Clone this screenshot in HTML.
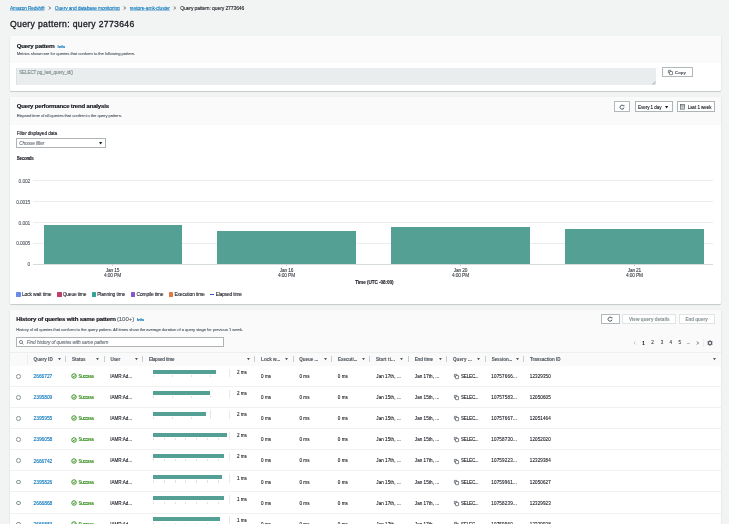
<!DOCTYPE html><html><head><meta charset="utf-8"><style>html,body{margin:0;padding:0;width:729px;height:524px;overflow:hidden;background:#f2f3f3;}
body{position:relative;font-family:"Liberation Sans",sans-serif;color:#16191f;}
#root{position:absolute;left:0;top:0;width:729px;height:524px;will-change:transform;overflow:hidden}
.t{position:absolute;white-space:nowrap;line-height:1;-webkit-text-stroke:0.1px currentColor}
.r{position:absolute;box-sizing:border-box;}
.b{font-weight:700}.i{font-style:italic}
.lk{color:#0073bb}
.g{color:#545b64}.lg{color:#687078}
.card{position:absolute;background:#fff;border-radius:1px;box-shadow:0 0.8px 0.7px 0 rgba(0,28,36,.17),0.5px 0.2px 0.5px 0 rgba(0,28,36,.07),-0.5px 0.2px 0.5px 0 rgba(0,28,36,.07);}
svg{position:absolute;overflow:visible}
</style></head><body><div id="root">
<div class="t lk" style="left:10.00px;top:6.70px;font-size:4.823px;letter-spacing:-0.150px;">Amazon Redshift</div>
<div class="r" style="left:10.00px;top:9.70px;width:34.40px;height:0.40px;background:#a3c6e3"></div>
<svg style="left:48.50px;top:7.90px" width="1" height="1"><path d="M0 -1.50 L1.50 0 L0 1.50" fill="none" stroke="#454b53" stroke-width="0.9"/></svg>
<div class="t lk" style="left:54.80px;top:6.72px;font-size:4.876px;letter-spacing:-0.113px;">Query and database monitoring</div>
<div class="r" style="left:54.80px;top:9.70px;width:64.80px;height:0.40px;background:#a3c6e3"></div>
<svg style="left:124.20px;top:7.90px" width="1" height="1"><path d="M0 -1.50 L1.50 0 L0 1.50" fill="none" stroke="#454b53" stroke-width="0.9"/></svg>
<div class="t lk" style="left:129.80px;top:6.71px;font-size:4.929px;letter-spacing:-0.114px;">restore-amk-cluster</div>
<div class="r" style="left:129.80px;top:9.70px;width:40.10px;height:0.40px;background:#a3c6e3"></div>
<svg style="left:174.10px;top:7.90px" width="1" height="1"><path d="M0 -1.50 L1.50 0 L0 1.50" fill="none" stroke="#454b53" stroke-width="0.9"/></svg>
<div class="t " style="left:180.20px;top:5.70px;font-size:5.035px;letter-spacing:-0.104px;">Query pattern: query 2773646</div>
<div class="t " style="left:10.00px;top:19.66px;font-size:8.649px;letter-spacing:0.340px;-webkit-text-stroke:0.3px #16191f">Query pattern: query 2773646</div>
<div class="card" style="left:9.5px;top:36px;width:711.5px;height:55.3px;"></div>
<div class="r" style="left:9.50px;top:36.00px;width:711.50px;height:26.80px;background:#fafafa"></div>
<div class="t b" style="left:16.70px;top:42.80px;font-size:6.148px;letter-spacing:-0.167px;-webkit-text-stroke:0.18px #16191f">Query pattern</div>
<div class="t b lk" style="left:57.60px;top:44.93px;font-size:4.346px;letter-spacing:-0.109px;">Info</div>
<div class="t g" style="left:16.70px;top:52.05px;font-size:4.240px;letter-spacing:-0.092px;">Metrics shown are for queries that conform to the following pattern.</div>
<div class="r" style="left:16.10px;top:67.50px;width:639.70px;height:17.20px;background:#eaeded;border-left:0.5px solid #dde1e1"></div>
<div class="t " style="left:19.20px;top:71.30px;font-size:4.590px;letter-spacing:-0.125px;color:#7d8a8b">SELECT pg_last_query_id()</div>
<svg style="left:651.5px;top:80.5px" width="4" height="4"><path d="M3.5 0.3 L0.3 3.5 M3.5 1.8 L1.8 3.5" stroke="#879596" stroke-width="0.6"/></svg>
<div class="r" style="left:662.40px;top:67.40px;width:30.30px;height:10.00px;border:0.8px solid #b0b9ba;border-radius:0.6px;background:#fff"></div>
<svg style="left:667.90px;top:70.30px" width="5" height="5"><path d="M0.4 3.3 V0.4 H3.2" fill="none" stroke="#545b64" stroke-width="0.75"/><rect x="1.5" y="1.5" width="3.1" height="3.2" rx="0.5" fill="none" stroke="#545b64" stroke-width="0.75"/></svg>
<div class="t b g" style="left:675.00px;top:70.93px;font-size:4.240px;letter-spacing:0.088px;-webkit-text-stroke:0.15px #545b64">Copy</div>
<div class="card" style="left:9.5px;top:96.5px;width:711.5px;height:207px;"></div>
<div class="r" style="left:9.50px;top:96.50px;width:711.50px;height:28.10px;background:#fafafa"></div>
<div class="t b" style="left:16.70px;top:103.20px;font-size:6.042px;letter-spacing:-0.178px;-webkit-text-stroke:0.18px #16191f">Query performance trend analysis</div>
<div class="t g" style="left:16.70px;top:114.15px;font-size:4.240px;letter-spacing:-0.102px;">Elapsed time of all queries that confirm to the query pattern.</div>
<div class="r" style="left:614.10px;top:101.10px;width:16.10px;height:10.60px;border:0.8px solid #b0b9ba;border-radius:0.6px;background:#fff"></div>
<svg style="left:619.10px;top:103.70px" width="6" height="6" viewBox="0 0 60 60"><path d="M46 19 A20 20 0 1 0 50 36" fill="none" stroke="#545b64" stroke-width="10"/><path d="M37 9 L54 9 L54 26 Z" fill="#545b64"/></svg>
<div class="r" style="left:635.00px;top:101.40px;width:37.60px;height:10.40px;border:0.8px solid #aeb4b5;background:#fff"></div>
<div class="t " style="left:638.00px;top:105.69px;font-size:4.558px;letter-spacing:-0.047px;">Every 1 day</div>
<svg style="left:665.20px;top:105.50px" width="4" height="3"><path d="M0 0 L3.2 0 L1.6 2.4000000000000004Z" fill="#16191f"/></svg>
<div class="r" style="left:677.30px;top:101.40px;width:37.40px;height:10.40px;border:0.8px solid #aeb4b5;background:#fff"></div>
<svg style="left:680.4px;top:104.2px" width="5" height="6"><rect x="0.35" y="0.35" width="4.2" height="4.8" fill="none" stroke="#545b64" stroke-width="0.7"/><path d="M0.35 1.7 H4.55 M1.4 2.9 H3.5 M1.4 4.0 H3.5" stroke="#545b64" stroke-width="0.6"/></svg>
<div class="t " style="left:687.80px;top:105.69px;font-size:4.558px;letter-spacing:-0.051px;">Last 1 week</div>
<div class="t " style="left:16.70px;top:132.22px;font-size:4.770px;letter-spacing:-0.112px;">Filter displayed data</div>
<div class="r" style="left:16.30px;top:138.30px;width:89.30px;height:9.90px;border:0.8px solid #aeb4b5;background:#fff"></div>
<div class="t i" style="left:19.20px;top:141.83px;font-size:4.717px;letter-spacing:-0.108px;color:#687078">Choose filter</div>
<svg style="left:99.00px;top:142.10px" width="4" height="3"><path d="M0 0 L3.2 0 L1.6 2.4000000000000004Z" fill="#16191f"/></svg>
<div class="t b" style="left:16.70px;top:157.20px;font-size:4.500px;letter-spacing:-0.267px;">Seconds</div>
<div class="r" style="left:32.60px;top:180.40px;width:680.30px;height:1.00px;background:#eaeded"></div>
<div class="t g" style="left:18.59px;top:180.02px;font-size:4.876px;letter-spacing:-0.114px;">0.002</div>
<div class="r" style="left:32.60px;top:201.40px;width:680.30px;height:1.00px;background:#eaeded"></div>
<div class="t g" style="left:16.15px;top:201.02px;font-size:4.876px;letter-spacing:-0.146px;">0.0015</div>
<div class="r" style="left:32.60px;top:221.90px;width:680.30px;height:1.00px;background:#eaeded"></div>
<div class="t g" style="left:18.59px;top:221.52px;font-size:4.876px;letter-spacing:-0.114px;">0.001</div>
<div class="r" style="left:32.60px;top:242.70px;width:680.30px;height:1.00px;background:#eaeded"></div>
<div class="t g" style="left:16.15px;top:242.32px;font-size:4.876px;letter-spacing:-0.146px;">0.0005</div>
<div class="r" style="left:32.60px;top:263.50px;width:680.30px;height:1.00px;background:#d5dbdb"></div>
<div class="t g" style="left:27.60px;top:263.12px;font-size:4.876px;letter-spacing:-0.203px;">0</div>
<div class="r" style="left:43.50px;top:224.50px;width:138.30px;height:39.50px;background:#54a095"></div>
<div class="r" style="left:217.30px;top:231.10px;width:138.60px;height:32.90px;background:#54a095"></div>
<div class="r" style="left:391.40px;top:227.20px;width:138.50px;height:36.80px;background:#54a095"></div>
<div class="r" style="left:565.40px;top:229.30px;width:138.30px;height:34.70px;background:#54a095"></div>
<div class="r" style="left:112.35px;top:264.30px;width:0.50px;height:1.90px;background:#c6ced0"></div>
<div class="r" style="left:286.35px;top:264.30px;width:0.50px;height:1.90px;background:#c6ced0"></div>
<div class="r" style="left:460.35px;top:264.30px;width:0.50px;height:1.90px;background:#c6ced0"></div>
<div class="r" style="left:634.25px;top:264.30px;width:0.50px;height:1.90px;background:#c6ced0"></div>
<div class="t " style="left:105.82px;top:268.82px;font-size:4.770px;letter-spacing:-0.152px;color:#3b4148">Jan 15</div>
<div class="t " style="left:104.05px;top:274.02px;font-size:4.770px;letter-spacing:-0.107px;color:#3b4148">4:00 PM</div>
<div class="t " style="left:279.82px;top:268.82px;font-size:4.770px;letter-spacing:-0.152px;color:#3b4148">Jan 16</div>
<div class="t " style="left:278.05px;top:274.02px;font-size:4.770px;letter-spacing:-0.107px;color:#3b4148">4:00 PM</div>
<div class="t " style="left:453.82px;top:268.82px;font-size:4.770px;letter-spacing:-0.152px;color:#3b4148">Jan 20</div>
<div class="t " style="left:452.05px;top:274.02px;font-size:4.770px;letter-spacing:-0.107px;color:#3b4148">4:00 PM</div>
<div class="t " style="left:627.72px;top:268.82px;font-size:4.770px;letter-spacing:-0.152px;color:#3b4148">Jan 21</div>
<div class="t " style="left:625.95px;top:274.02px;font-size:4.770px;letter-spacing:-0.107px;color:#3b4148">4:00 PM</div>
<div class="t b" style="left:355.17px;top:280.80px;font-size:4.664px;letter-spacing:-0.066px;">Time (UTC -08:00)</div>
<div class="r" style="left:16.20px;top:292.00px;width:4.50px;height:4.50px;background:#688ae8;border-radius:0.4px"></div>
<div class="t " style="left:21.90px;top:293.12px;font-size:4.876px;letter-spacing:-0.085px;">Lock wait time</div>
<div class="r" style="left:57.10px;top:292.00px;width:4.50px;height:4.50px;background:#c33d69;border-radius:0.4px"></div>
<div class="t " style="left:62.70px;top:293.12px;font-size:4.876px;letter-spacing:-0.163px;">Queue time</div>
<div class="r" style="left:91.70px;top:292.00px;width:4.50px;height:4.50px;background:#2ea597;border-radius:0.4px"></div>
<div class="t " style="left:97.20px;top:293.12px;font-size:4.876px;letter-spacing:-0.112px;">Planning time</div>
<div class="r" style="left:130.90px;top:292.00px;width:4.50px;height:4.50px;background:#8456ce;border-radius:0.4px"></div>
<div class="t " style="left:136.60px;top:293.12px;font-size:4.876px;letter-spacing:-0.138px;">Compile time</div>
<div class="r" style="left:168.90px;top:292.00px;width:4.50px;height:4.50px;background:#e07941;border-radius:0.4px"></div>
<div class="t " style="left:174.40px;top:293.12px;font-size:4.876px;letter-spacing:-0.112px;">Execution time</div>
<div class="r" style="left:210.00px;top:293.80px;width:4.00px;height:1.00px;background:#3759ce"></div>
<div class="t " style="left:215.80px;top:293.12px;font-size:4.770px;letter-spacing:-0.130px;">Elapsed time</div>
<div class="card" style="left:9.5px;top:310px;width:711.5px;height:240px;"></div>
<div class="r" style="left:9.50px;top:310.00px;width:711.50px;height:41.90px;background:#fafafa"></div>
<div class="t b" style="left:16.30px;top:316.10px;font-size:6.095px;letter-spacing:-0.157px;-webkit-text-stroke:0.18px #16191f">History of queries with same pattern</div>
<div class="t " style="left:116.90px;top:316.12px;font-size:6.095px;letter-spacing:-0.092px;color:#545b64">(100+)</div>
<div class="t b lk" style="left:136.90px;top:318.33px;font-size:4.346px;letter-spacing:-0.209px;">Info</div>
<div class="t g" style="left:16.30px;top:327.74px;font-size:4.219px;letter-spacing:-0.096px;">History of all queries that conform to the query pattern. All times show the average duration of a query stage for previous 1 week.</div>
<div class="r" style="left:16.30px;top:337.30px;width:207.50px;height:10.20px;border:0.8px solid #aeb4b5;background:#fff"></div>
<svg style="left:20.9px;top:342.0px" width="1" height="1"><circle cx="0" cy="0" r="1.55" fill="none" stroke="#545b64" stroke-width="0.7"/><path d="M1.1 1.1 L2.4 2.4" stroke="#545b64" stroke-width="0.75"/></svg>
<div class="t i" style="left:26.80px;top:341.34px;font-size:4.802px;letter-spacing:-0.117px;color:#687078">Find history of queries with same pattern</div>
<div class="r" style="left:601.20px;top:314.30px;width:18.70px;height:10.10px;border:0.8px solid #b0b9ba;border-radius:0.6px;background:#fff"></div>
<svg style="left:607.40px;top:316.40px" width="6" height="6" viewBox="0 0 60 60"><path d="M46 19 A20 20 0 1 0 50 36" fill="none" stroke="#545b64" stroke-width="10"/><path d="M37 9 L54 9 L54 26 Z" fill="#545b64"/></svg>
<div class="r" style="left:622.40px;top:314.20px;width:54.00px;height:10.20px;border:0.6px solid #e1e4e4;background:#fff"></div>
<div class="t b" style="left:629.03px;top:318.20px;font-size:4.558px;letter-spacing:0.056px;color:#879596">View query details</div>
<div class="r" style="left:679.00px;top:314.20px;width:35.90px;height:10.20px;border:0.6px solid #e1e4e4;background:#fff"></div>
<div class="t b" style="left:685.45px;top:318.20px;font-size:4.558px;letter-spacing:0.007px;color:#879596">End query</div>
<svg style="left:633.90px;top:342.70px" width="1" height="1"><path d="M1.50 -1.50 L0 0 L1.50 1.50" fill="none" stroke="#aab7b8" stroke-width="0.7"/></svg>
<div class="t b" style="left:642.33px;top:341.50px;font-size:4.558px;letter-spacing:-0.143px;">1</div>
<div class="t " style="left:651.33px;top:341.49px;font-size:4.558px;letter-spacing:-0.143px;color:#3b4148">2</div>
<div class="t " style="left:660.63px;top:341.49px;font-size:4.558px;letter-spacing:-0.143px;color:#3b4148">3</div>
<div class="t " style="left:669.53px;top:341.49px;font-size:4.558px;letter-spacing:-0.143px;color:#3b4148">4</div>
<div class="t " style="left:678.53px;top:341.49px;font-size:4.558px;letter-spacing:-0.143px;color:#3b4148">5</div>
<div class="t g" style="left:686.76px;top:341.04px;font-size:4.346px;letter-spacing:-0.068px;">...</div>
<svg style="left:696.70px;top:342.70px" width="1" height="1"><path d="M0 -1.50 L1.50 0 L0 1.50" fill="none" stroke="#3b4148" stroke-width="0.8"/></svg>
<div class="r" style="left:703.20px;top:338.50px;width:0.50px;height:8.50px;background:#eaeded"></div>
<svg style="left:710.3px;top:342.7px" width="1" height="1"><circle cx="0" cy="0" r="1.75" fill="none" stroke="#545b64" stroke-width="1.1"/><rect x="-0.55" y="-2.75" width="1.1" height="1.2" fill="#545b64" transform="rotate(0)"/><rect x="-0.55" y="-2.75" width="1.1" height="1.2" fill="#545b64" transform="rotate(60)"/><rect x="-0.55" y="-2.75" width="1.1" height="1.2" fill="#545b64" transform="rotate(120)"/><rect x="-0.55" y="-2.75" width="1.1" height="1.2" fill="#545b64" transform="rotate(180)"/><rect x="-0.55" y="-2.75" width="1.1" height="1.2" fill="#545b64" transform="rotate(240)"/><rect x="-0.55" y="-2.75" width="1.1" height="1.2" fill="#545b64" transform="rotate(300)"/><circle cx="0" cy="0" r="0.45" fill="#545b64"/></svg>
<div class="r" style="left:9.50px;top:351.70px;width:711.50px;height:14.30px;background:#fafafa;border-top:0.6px solid #eef0f0"></div>
<div class="r" style="left:27.10px;top:353.50px;width:0.60px;height:10.50px;background:#eaeded"></div>
<div class="r" style="left:65.35px;top:356.00px;width:0.60px;height:6.00px;background:#c6ced0"></div>
<div class="r" style="left:103.75px;top:356.00px;width:0.60px;height:6.00px;background:#c6ced0"></div>
<div class="r" style="left:142.15px;top:356.00px;width:0.60px;height:6.00px;background:#c6ced0"></div>
<div class="r" style="left:254.35px;top:356.00px;width:0.60px;height:6.00px;background:#c6ced0"></div>
<div class="r" style="left:292.55px;top:356.00px;width:0.60px;height:6.00px;background:#c6ced0"></div>
<div class="r" style="left:331.25px;top:356.00px;width:0.60px;height:6.00px;background:#c6ced0"></div>
<div class="r" style="left:369.15px;top:356.00px;width:0.60px;height:6.00px;background:#c6ced0"></div>
<div class="r" style="left:407.95px;top:356.00px;width:0.60px;height:6.00px;background:#c6ced0"></div>
<div class="r" style="left:446.25px;top:356.00px;width:0.60px;height:6.00px;background:#c6ced0"></div>
<div class="r" style="left:484.95px;top:356.00px;width:0.60px;height:6.00px;background:#c6ced0"></div>
<div class="r" style="left:523.25px;top:356.00px;width:0.60px;height:6.00px;background:#c6ced0"></div>
<div class="t b" style="left:33.60px;top:358.00px;font-size:4.558px;letter-spacing:0.018px;color:#545b64">Query ID</div>
<svg style="left:57.80px;top:357.68px" width="4" height="3"><path d="M0 0 L3.0 0 L1.5 2.25Z" fill="#545b64"/></svg>
<div class="t b" style="left:72.10px;top:358.00px;font-size:4.558px;letter-spacing:-0.068px;color:#545b64">Status</div>
<svg style="left:96.20px;top:357.68px" width="4" height="3"><path d="M0 0 L3.0 0 L1.5 2.25Z" fill="#545b64"/></svg>
<div class="t b" style="left:110.50px;top:358.00px;font-size:4.558px;letter-spacing:-0.106px;color:#545b64">User</div>
<svg style="left:134.60px;top:357.68px" width="4" height="3"><path d="M0 0 L3.0 0 L1.5 2.25Z" fill="#545b64"/></svg>
<div class="t b" style="left:148.90px;top:358.00px;font-size:4.558px;letter-spacing:-0.214px;color:#545b64">Elapsed time</div>
<svg style="left:246.80px;top:357.68px" width="4" height="3"><path d="M0 0 L3.0 0 L1.5 2.25Z" fill="#545b64"/></svg>
<div class="t b" style="left:261.10px;top:358.00px;font-size:4.558px;letter-spacing:0.028px;color:#545b64">Lock w...</div>
<svg style="left:285.00px;top:357.68px" width="4" height="3"><path d="M0 0 L3.0 0 L1.5 2.25Z" fill="#545b64"/></svg>
<div class="t b" style="left:299.30px;top:358.00px;font-size:4.558px;letter-spacing:-0.023px;color:#545b64">Queue ...</div>
<svg style="left:323.70px;top:357.68px" width="4" height="3"><path d="M0 0 L3.0 0 L1.5 2.25Z" fill="#545b64"/></svg>
<div class="t b" style="left:338.00px;top:358.00px;font-size:4.558px;letter-spacing:-0.067px;color:#545b64">Executi...</div>
<svg style="left:361.60px;top:357.68px" width="4" height="3"><path d="M0 0 L3.0 0 L1.5 2.25Z" fill="#545b64"/></svg>
<div class="t b" style="left:375.90px;top:358.00px;font-size:4.558px;letter-spacing:0.091px;color:#545b64">Start ti...</div>
<svg style="left:400.40px;top:357.68px" width="4" height="3"><path d="M0 0 L3.0 0 L1.5 2.25Z" fill="#545b64"/></svg>
<div class="t b" style="left:414.70px;top:358.00px;font-size:4.558px;letter-spacing:-0.113px;color:#545b64">End time</div>
<svg style="left:438.70px;top:357.68px" width="4" height="3"><path d="M0 0 L3.0 0 L1.5 2.25Z" fill="#545b64"/></svg>
<div class="t b" style="left:453.00px;top:358.00px;font-size:4.558px;letter-spacing:0.077px;color:#545b64">Query ...</div>
<svg style="left:477.40px;top:357.68px" width="4" height="3"><path d="M0 0 L3.0 0 L1.5 2.25Z" fill="#545b64"/></svg>
<div class="t b" style="left:491.70px;top:358.00px;font-size:4.558px;letter-spacing:-0.073px;color:#545b64">Session...</div>
<svg style="left:515.70px;top:357.68px" width="4" height="3"><path d="M0 0 L3.0 0 L1.5 2.25Z" fill="#545b64"/></svg>
<div class="t b" style="left:530.00px;top:358.00px;font-size:4.558px;letter-spacing:-0.067px;color:#545b64">Transaction ID</div>
<svg style="left:713.20px;top:357.68px" width="4" height="3"><path d="M0 0 L3.0 0 L1.5 2.25Z" fill="#545b64"/></svg>
<div class="r" style="left:16.2px;top:374.00px;width:4.6px;height:4.6px;border:0.7px solid #879596;border-radius:50%"></div>
<div class="t lk" style="left:33.60px;top:375.12px;font-size:4.876px;letter-spacing:-0.046px;">2666727</div>
<svg style="left:74.45px;top:376.20px" width="1" height="1"><circle cx="0" cy="0" r="2.25" fill="none" stroke="#1d8102" stroke-width="0.85"/><path d="M-1.1 0 L-0.2 0.9 L1.2 -0.8" fill="none" stroke="#1d8102" stroke-width="0.8"/></svg>
<div class="t " style="left:78.50px;top:375.10px;font-size:4.452px;letter-spacing:-0.212px;color:#1d8102">Success</div>
<div class="t " style="left:110.30px;top:375.09px;font-size:4.558px;letter-spacing:-0.028px;">IAMR:Ad...</div>
<div class="r" style="left:153.00px;top:369.50px;width:62.90px;height:4.20px;background:#54a095"></div>
<div class="r" style="left:152.50px;top:374.90px;width:0.45px;height:2.20px;background:#dfe3e3"></div>
<div class="r" style="left:171.70px;top:374.90px;width:0.45px;height:2.20px;background:#dfe3e3"></div>
<div class="r" style="left:191.00px;top:374.90px;width:0.45px;height:2.20px;background:#dfe3e3"></div>
<div class="r" style="left:210.20px;top:374.90px;width:0.45px;height:2.20px;background:#dfe3e3"></div>
<div class="r" style="left:229.30px;top:368.50px;width:0.45px;height:8.50px;background:#e9ebeb"></div>
<div class="t " style="left:237.00px;top:371.09px;font-size:4.558px;letter-spacing:0.010px;">2 ms</div>
<div class="t " style="left:261.00px;top:375.09px;font-size:4.558px;letter-spacing:0.085px;">0 ms</div>
<div class="t " style="left:299.40px;top:375.09px;font-size:4.558px;letter-spacing:0.085px;">0 ms</div>
<div class="t " style="left:337.70px;top:375.09px;font-size:4.558px;letter-spacing:0.085px;">0 ms</div>
<div class="t " style="left:376.30px;top:375.09px;font-size:4.558px;letter-spacing:0.056px;">Jan 17th, ...</div>
<div class="t " style="left:414.80px;top:375.09px;font-size:4.558px;letter-spacing:0.056px;">Jan 17th, ...</div>
<svg style="left:454.20px;top:374.10px" width="5" height="5"><path d="M0.4 3.3 V0.4 H3.2" fill="none" stroke="#545b64" stroke-width="0.75"/><rect x="1.5" y="1.5" width="3.1" height="3.2" rx="0.5" fill="none" stroke="#545b64" stroke-width="0.75"/></svg>
<div class="t " style="left:461.00px;top:375.09px;font-size:4.558px;letter-spacing:-0.175px;">SELEC...</div>
<div class="t " style="left:491.30px;top:375.09px;font-size:4.558px;letter-spacing:0.161px;">10757666...</div>
<div class="t " style="left:529.80px;top:375.09px;font-size:4.558px;letter-spacing:0.096px;">12329350</div>
<div class="r" style="left:9.50px;top:386.00px;width:711.50px;height:1.00px;background:#f0f1f1"></div>
<div class="r" style="left:16.2px;top:395.10px;width:4.6px;height:4.6px;border:0.7px solid #879596;border-radius:50%"></div>
<div class="t lk" style="left:33.60px;top:396.22px;font-size:4.876px;letter-spacing:-0.046px;">2395809</div>
<svg style="left:74.45px;top:397.30px" width="1" height="1"><circle cx="0" cy="0" r="2.25" fill="none" stroke="#1d8102" stroke-width="0.85"/><path d="M-1.1 0 L-0.2 0.9 L1.2 -0.8" fill="none" stroke="#1d8102" stroke-width="0.8"/></svg>
<div class="t " style="left:78.50px;top:396.20px;font-size:4.452px;letter-spacing:-0.212px;color:#1d8102">Success</div>
<div class="t " style="left:110.30px;top:396.19px;font-size:4.558px;letter-spacing:-0.028px;">IAMR:Ad...</div>
<div class="r" style="left:153.00px;top:390.60px;width:56.90px;height:4.20px;background:#54a095"></div>
<div class="r" style="left:152.50px;top:396.00px;width:0.45px;height:2.20px;background:#dfe3e3"></div>
<div class="r" style="left:171.70px;top:396.00px;width:0.45px;height:2.20px;background:#dfe3e3"></div>
<div class="r" style="left:191.00px;top:396.00px;width:0.45px;height:2.20px;background:#dfe3e3"></div>
<div class="r" style="left:210.20px;top:396.00px;width:0.45px;height:2.20px;background:#dfe3e3"></div>
<div class="r" style="left:229.30px;top:389.60px;width:0.45px;height:8.50px;background:#e9ebeb"></div>
<div class="t " style="left:237.00px;top:392.19px;font-size:4.558px;letter-spacing:0.010px;">2 ms</div>
<div class="t " style="left:261.00px;top:396.19px;font-size:4.558px;letter-spacing:0.085px;">0 ms</div>
<div class="t " style="left:299.40px;top:396.19px;font-size:4.558px;letter-spacing:0.085px;">0 ms</div>
<div class="t " style="left:337.70px;top:396.19px;font-size:4.558px;letter-spacing:0.085px;">0 ms</div>
<div class="t " style="left:376.30px;top:396.19px;font-size:4.558px;letter-spacing:0.056px;">Jan 15th, ...</div>
<div class="t " style="left:414.80px;top:396.19px;font-size:4.558px;letter-spacing:0.056px;">Jan 15th, ...</div>
<svg style="left:454.20px;top:395.20px" width="5" height="5"><path d="M0.4 3.3 V0.4 H3.2" fill="none" stroke="#545b64" stroke-width="0.75"/><rect x="1.5" y="1.5" width="3.1" height="3.2" rx="0.5" fill="none" stroke="#545b64" stroke-width="0.75"/></svg>
<div class="t " style="left:461.00px;top:396.19px;font-size:4.558px;letter-spacing:-0.175px;">SELEC...</div>
<div class="t " style="left:491.30px;top:396.19px;font-size:4.558px;letter-spacing:0.161px;">10757583...</div>
<div class="t " style="left:529.80px;top:396.19px;font-size:4.558px;letter-spacing:0.096px;">12050605</div>
<div class="r" style="left:9.50px;top:407.00px;width:711.50px;height:1.00px;background:#f0f1f1"></div>
<div class="r" style="left:16.2px;top:416.20px;width:4.6px;height:4.6px;border:0.7px solid #879596;border-radius:50%"></div>
<div class="t lk" style="left:33.60px;top:417.32px;font-size:4.876px;letter-spacing:-0.046px;">2395955</div>
<svg style="left:74.45px;top:418.40px" width="1" height="1"><circle cx="0" cy="0" r="2.25" fill="none" stroke="#1d8102" stroke-width="0.85"/><path d="M-1.1 0 L-0.2 0.9 L1.2 -0.8" fill="none" stroke="#1d8102" stroke-width="0.8"/></svg>
<div class="t " style="left:78.50px;top:417.30px;font-size:4.452px;letter-spacing:-0.212px;color:#1d8102">Success</div>
<div class="t " style="left:110.30px;top:417.29px;font-size:4.558px;letter-spacing:-0.028px;">IAMR:Ad...</div>
<div class="r" style="left:153.00px;top:411.70px;width:53.10px;height:4.20px;background:#54a095"></div>
<div class="r" style="left:152.50px;top:417.10px;width:0.45px;height:2.20px;background:#dfe3e3"></div>
<div class="r" style="left:171.70px;top:417.10px;width:0.45px;height:2.20px;background:#dfe3e3"></div>
<div class="r" style="left:191.00px;top:417.10px;width:0.45px;height:2.20px;background:#dfe3e3"></div>
<div class="r" style="left:210.00px;top:410.20px;width:0.50px;height:9.00px;background:#e3e6e6"></div>
<div class="r" style="left:229.30px;top:410.70px;width:0.45px;height:8.50px;background:#e9ebeb"></div>
<div class="t " style="left:237.00px;top:413.29px;font-size:4.558px;letter-spacing:0.010px;">2 ms</div>
<div class="t " style="left:261.00px;top:417.29px;font-size:4.558px;letter-spacing:0.085px;">0 ms</div>
<div class="t " style="left:299.40px;top:417.29px;font-size:4.558px;letter-spacing:0.085px;">0 ms</div>
<div class="t " style="left:337.70px;top:417.29px;font-size:4.558px;letter-spacing:0.085px;">0 ms</div>
<div class="t " style="left:376.30px;top:417.29px;font-size:4.558px;letter-spacing:0.056px;">Jan 15th, ...</div>
<div class="t " style="left:414.80px;top:417.29px;font-size:4.558px;letter-spacing:0.056px;">Jan 15th, ...</div>
<svg style="left:454.20px;top:416.30px" width="5" height="5"><path d="M0.4 3.3 V0.4 H3.2" fill="none" stroke="#545b64" stroke-width="0.75"/><rect x="1.5" y="1.5" width="3.1" height="3.2" rx="0.5" fill="none" stroke="#545b64" stroke-width="0.75"/></svg>
<div class="t " style="left:461.00px;top:417.29px;font-size:4.558px;letter-spacing:-0.175px;">SELEC...</div>
<div class="t " style="left:491.30px;top:417.29px;font-size:4.558px;letter-spacing:0.161px;">10757667...</div>
<div class="t " style="left:529.80px;top:417.29px;font-size:4.558px;letter-spacing:0.096px;">12051464</div>
<div class="r" style="left:9.50px;top:428.00px;width:711.50px;height:1.00px;background:#f0f1f1"></div>
<div class="r" style="left:16.2px;top:437.30px;width:4.6px;height:4.6px;border:0.7px solid #879596;border-radius:50%"></div>
<div class="t lk" style="left:33.60px;top:438.42px;font-size:4.876px;letter-spacing:-0.046px;">2396058</div>
<svg style="left:74.45px;top:439.50px" width="1" height="1"><circle cx="0" cy="0" r="2.25" fill="none" stroke="#1d8102" stroke-width="0.85"/><path d="M-1.1 0 L-0.2 0.9 L1.2 -0.8" fill="none" stroke="#1d8102" stroke-width="0.8"/></svg>
<div class="t " style="left:78.50px;top:438.40px;font-size:4.452px;letter-spacing:-0.212px;color:#1d8102">Success</div>
<div class="t " style="left:110.30px;top:438.39px;font-size:4.558px;letter-spacing:-0.028px;">IAMR:Ad...</div>
<div class="r" style="left:153.00px;top:432.80px;width:73.80px;height:4.20px;background:#54a095"></div>
<div class="r" style="left:152.60px;top:438.20px;width:0.45px;height:2.20px;background:#dfe3e3"></div>
<div class="r" style="left:163.55px;top:438.20px;width:0.45px;height:2.20px;background:#dfe3e3"></div>
<div class="r" style="left:174.50px;top:438.20px;width:0.45px;height:2.20px;background:#dfe3e3"></div>
<div class="r" style="left:185.45px;top:438.20px;width:0.45px;height:2.20px;background:#dfe3e3"></div>
<div class="r" style="left:196.40px;top:438.20px;width:0.45px;height:2.20px;background:#dfe3e3"></div>
<div class="r" style="left:207.35px;top:438.20px;width:0.45px;height:2.20px;background:#dfe3e3"></div>
<div class="r" style="left:218.30px;top:438.20px;width:0.45px;height:2.20px;background:#dfe3e3"></div>
<div class="r" style="left:229.30px;top:431.80px;width:0.45px;height:8.50px;background:#e9ebeb"></div>
<div class="t " style="left:237.00px;top:434.39px;font-size:4.558px;letter-spacing:0.010px;">2 ms</div>
<div class="t " style="left:261.00px;top:438.39px;font-size:4.558px;letter-spacing:0.085px;">0 ms</div>
<div class="t " style="left:299.40px;top:438.39px;font-size:4.558px;letter-spacing:0.085px;">0 ms</div>
<div class="t " style="left:337.70px;top:438.39px;font-size:4.558px;letter-spacing:0.085px;">0 ms</div>
<div class="t " style="left:376.30px;top:438.39px;font-size:4.558px;letter-spacing:0.056px;">Jan 15th, ...</div>
<div class="t " style="left:414.80px;top:438.39px;font-size:4.558px;letter-spacing:0.056px;">Jan 15th, ...</div>
<svg style="left:454.20px;top:437.40px" width="5" height="5"><path d="M0.4 3.3 V0.4 H3.2" fill="none" stroke="#545b64" stroke-width="0.75"/><rect x="1.5" y="1.5" width="3.1" height="3.2" rx="0.5" fill="none" stroke="#545b64" stroke-width="0.75"/></svg>
<div class="t " style="left:461.00px;top:438.39px;font-size:4.558px;letter-spacing:-0.175px;">SELEC...</div>
<div class="t " style="left:491.30px;top:438.39px;font-size:4.558px;letter-spacing:0.161px;">10758730...</div>
<div class="t " style="left:529.80px;top:438.39px;font-size:4.558px;letter-spacing:0.096px;">12052020</div>
<div class="r" style="left:9.50px;top:449.00px;width:711.50px;height:1.00px;background:#f0f1f1"></div>
<div class="r" style="left:16.2px;top:458.40px;width:4.6px;height:4.6px;border:0.7px solid #879596;border-radius:50%"></div>
<div class="t lk" style="left:33.60px;top:459.52px;font-size:4.876px;letter-spacing:-0.046px;">2666742</div>
<svg style="left:74.45px;top:460.60px" width="1" height="1"><circle cx="0" cy="0" r="2.25" fill="none" stroke="#1d8102" stroke-width="0.85"/><path d="M-1.1 0 L-0.2 0.9 L1.2 -0.8" fill="none" stroke="#1d8102" stroke-width="0.8"/></svg>
<div class="t " style="left:78.50px;top:459.50px;font-size:4.452px;letter-spacing:-0.212px;color:#1d8102">Success</div>
<div class="t " style="left:110.30px;top:459.49px;font-size:4.558px;letter-spacing:-0.028px;">IAMR:Ad...</div>
<div class="r" style="left:153.00px;top:453.90px;width:70.50px;height:4.20px;background:#54a095"></div>
<div class="r" style="left:152.60px;top:459.30px;width:0.45px;height:2.20px;background:#dfe3e3"></div>
<div class="r" style="left:163.55px;top:459.30px;width:0.45px;height:2.20px;background:#dfe3e3"></div>
<div class="r" style="left:174.50px;top:459.30px;width:0.45px;height:2.20px;background:#dfe3e3"></div>
<div class="r" style="left:185.45px;top:459.30px;width:0.45px;height:2.20px;background:#dfe3e3"></div>
<div class="r" style="left:196.40px;top:459.30px;width:0.45px;height:2.20px;background:#dfe3e3"></div>
<div class="r" style="left:207.35px;top:459.30px;width:0.45px;height:2.20px;background:#dfe3e3"></div>
<div class="r" style="left:218.30px;top:459.30px;width:0.45px;height:2.20px;background:#dfe3e3"></div>
<div class="r" style="left:229.30px;top:452.90px;width:0.45px;height:8.50px;background:#e9ebeb"></div>
<div class="t " style="left:237.00px;top:455.49px;font-size:4.558px;letter-spacing:0.010px;">2 ms</div>
<div class="t " style="left:261.00px;top:459.49px;font-size:4.558px;letter-spacing:0.085px;">0 ms</div>
<div class="t " style="left:299.40px;top:459.49px;font-size:4.558px;letter-spacing:0.085px;">0 ms</div>
<div class="t " style="left:337.70px;top:459.49px;font-size:4.558px;letter-spacing:0.085px;">0 ms</div>
<div class="t " style="left:376.30px;top:459.49px;font-size:4.558px;letter-spacing:0.056px;">Jan 17th, ...</div>
<div class="t " style="left:414.80px;top:459.49px;font-size:4.558px;letter-spacing:0.056px;">Jan 17th, ...</div>
<svg style="left:454.20px;top:458.50px" width="5" height="5"><path d="M0.4 3.3 V0.4 H3.2" fill="none" stroke="#545b64" stroke-width="0.75"/><rect x="1.5" y="1.5" width="3.1" height="3.2" rx="0.5" fill="none" stroke="#545b64" stroke-width="0.75"/></svg>
<div class="t " style="left:461.00px;top:459.49px;font-size:4.558px;letter-spacing:-0.175px;">SELEC...</div>
<div class="t " style="left:491.30px;top:459.49px;font-size:4.558px;letter-spacing:0.161px;">10759223...</div>
<div class="t " style="left:529.80px;top:459.49px;font-size:4.558px;letter-spacing:0.096px;">12329384</div>
<div class="r" style="left:9.50px;top:470.00px;width:711.50px;height:1.00px;background:#f0f1f1"></div>
<div class="r" style="left:16.2px;top:479.50px;width:4.6px;height:4.6px;border:0.7px solid #879596;border-radius:50%"></div>
<div class="t lk" style="left:33.60px;top:480.62px;font-size:4.876px;letter-spacing:-0.046px;">2395826</div>
<svg style="left:74.45px;top:481.70px" width="1" height="1"><circle cx="0" cy="0" r="2.25" fill="none" stroke="#1d8102" stroke-width="0.85"/><path d="M-1.1 0 L-0.2 0.9 L1.2 -0.8" fill="none" stroke="#1d8102" stroke-width="0.8"/></svg>
<div class="t " style="left:78.50px;top:480.60px;font-size:4.452px;letter-spacing:-0.212px;color:#1d8102">Success</div>
<div class="t " style="left:110.30px;top:480.59px;font-size:4.558px;letter-spacing:-0.028px;">IAMR:Ad...</div>
<div class="r" style="left:153.00px;top:475.00px;width:68.70px;height:4.20px;background:#54a095"></div>
<div class="r" style="left:152.60px;top:480.40px;width:0.45px;height:2.20px;background:#dfe3e3"></div>
<div class="r" style="left:163.55px;top:480.40px;width:0.45px;height:2.20px;background:#dfe3e3"></div>
<div class="r" style="left:174.50px;top:480.40px;width:0.45px;height:2.20px;background:#dfe3e3"></div>
<div class="r" style="left:185.45px;top:480.40px;width:0.45px;height:2.20px;background:#dfe3e3"></div>
<div class="r" style="left:196.40px;top:480.40px;width:0.45px;height:2.20px;background:#dfe3e3"></div>
<div class="r" style="left:207.35px;top:480.40px;width:0.45px;height:2.20px;background:#dfe3e3"></div>
<div class="r" style="left:218.30px;top:480.40px;width:0.45px;height:2.20px;background:#dfe3e3"></div>
<div class="r" style="left:229.30px;top:474.00px;width:0.45px;height:8.50px;background:#e9ebeb"></div>
<div class="t " style="left:237.00px;top:476.59px;font-size:4.558px;letter-spacing:0.010px;">1 ms</div>
<div class="t " style="left:261.00px;top:480.59px;font-size:4.558px;letter-spacing:0.085px;">0 ms</div>
<div class="t " style="left:299.40px;top:480.59px;font-size:4.558px;letter-spacing:0.085px;">0 ms</div>
<div class="t " style="left:337.70px;top:480.59px;font-size:4.558px;letter-spacing:0.085px;">0 ms</div>
<div class="t " style="left:376.30px;top:480.59px;font-size:4.558px;letter-spacing:0.056px;">Jan 15th, ...</div>
<div class="t " style="left:414.80px;top:480.59px;font-size:4.558px;letter-spacing:0.056px;">Jan 15th, ...</div>
<svg style="left:454.20px;top:479.60px" width="5" height="5"><path d="M0.4 3.3 V0.4 H3.2" fill="none" stroke="#545b64" stroke-width="0.75"/><rect x="1.5" y="1.5" width="3.1" height="3.2" rx="0.5" fill="none" stroke="#545b64" stroke-width="0.75"/></svg>
<div class="t " style="left:461.00px;top:480.59px;font-size:4.558px;letter-spacing:-0.175px;">SELEC...</div>
<div class="t " style="left:491.30px;top:480.59px;font-size:4.558px;letter-spacing:0.161px;">10759961...</div>
<div class="t " style="left:529.80px;top:480.59px;font-size:4.558px;letter-spacing:0.096px;">12050627</div>
<div class="r" style="left:9.50px;top:491.00px;width:711.50px;height:1.00px;background:#f0f1f1"></div>
<div class="r" style="left:16.2px;top:500.60px;width:4.6px;height:4.6px;border:0.7px solid #879596;border-radius:50%"></div>
<div class="t lk" style="left:33.60px;top:501.72px;font-size:4.876px;letter-spacing:-0.046px;">2666868</div>
<svg style="left:74.45px;top:502.80px" width="1" height="1"><circle cx="0" cy="0" r="2.25" fill="none" stroke="#1d8102" stroke-width="0.85"/><path d="M-1.1 0 L-0.2 0.9 L1.2 -0.8" fill="none" stroke="#1d8102" stroke-width="0.8"/></svg>
<div class="t " style="left:78.50px;top:501.70px;font-size:4.452px;letter-spacing:-0.212px;color:#1d8102">Success</div>
<div class="t " style="left:110.30px;top:501.69px;font-size:4.558px;letter-spacing:-0.028px;">IAMR:Ad...</div>
<div class="r" style="left:153.00px;top:496.10px;width:70.90px;height:4.20px;background:#54a095"></div>
<div class="r" style="left:152.60px;top:501.50px;width:0.45px;height:2.20px;background:#dfe3e3"></div>
<div class="r" style="left:163.55px;top:501.50px;width:0.45px;height:2.20px;background:#dfe3e3"></div>
<div class="r" style="left:174.50px;top:501.50px;width:0.45px;height:2.20px;background:#dfe3e3"></div>
<div class="r" style="left:185.45px;top:501.50px;width:0.45px;height:2.20px;background:#dfe3e3"></div>
<div class="r" style="left:196.40px;top:501.50px;width:0.45px;height:2.20px;background:#dfe3e3"></div>
<div class="r" style="left:207.35px;top:501.50px;width:0.45px;height:2.20px;background:#dfe3e3"></div>
<div class="r" style="left:218.30px;top:501.50px;width:0.45px;height:2.20px;background:#dfe3e3"></div>
<div class="r" style="left:229.30px;top:495.10px;width:0.45px;height:8.50px;background:#e9ebeb"></div>
<div class="t " style="left:237.00px;top:497.69px;font-size:4.558px;letter-spacing:0.010px;">1 ms</div>
<div class="t " style="left:261.00px;top:501.69px;font-size:4.558px;letter-spacing:0.085px;">0 ms</div>
<div class="t " style="left:299.40px;top:501.69px;font-size:4.558px;letter-spacing:0.085px;">0 ms</div>
<div class="t " style="left:337.70px;top:501.69px;font-size:4.558px;letter-spacing:0.085px;">0 ms</div>
<div class="t " style="left:376.30px;top:501.69px;font-size:4.558px;letter-spacing:0.056px;">Jan 17th, ...</div>
<div class="t " style="left:414.80px;top:501.69px;font-size:4.558px;letter-spacing:0.056px;">Jan 17th, ...</div>
<svg style="left:454.20px;top:500.70px" width="5" height="5"><path d="M0.4 3.3 V0.4 H3.2" fill="none" stroke="#545b64" stroke-width="0.75"/><rect x="1.5" y="1.5" width="3.1" height="3.2" rx="0.5" fill="none" stroke="#545b64" stroke-width="0.75"/></svg>
<div class="t " style="left:461.00px;top:501.69px;font-size:4.558px;letter-spacing:-0.175px;">SELEC...</div>
<div class="t " style="left:491.30px;top:501.69px;font-size:4.558px;letter-spacing:0.161px;">10758239...</div>
<div class="t " style="left:529.80px;top:501.69px;font-size:4.558px;letter-spacing:0.096px;">12329923</div>
<div class="r" style="left:9.50px;top:513.00px;width:711.50px;height:1.00px;background:#f0f1f1"></div>
<div class="r" style="left:16.2px;top:521.70px;width:4.6px;height:4.6px;border:0.7px solid #879596;border-radius:50%"></div>
<div class="t lk" style="left:33.60px;top:522.82px;font-size:4.876px;letter-spacing:-0.046px;">2666883</div>
<svg style="left:74.45px;top:523.90px" width="1" height="1"><circle cx="0" cy="0" r="2.25" fill="none" stroke="#1d8102" stroke-width="0.85"/><path d="M-1.1 0 L-0.2 0.9 L1.2 -0.8" fill="none" stroke="#1d8102" stroke-width="0.8"/></svg>
<div class="t " style="left:78.50px;top:522.80px;font-size:4.452px;letter-spacing:-0.212px;color:#1d8102">Success</div>
<div class="t " style="left:110.30px;top:522.79px;font-size:4.558px;letter-spacing:-0.028px;">IAMR:Ad...</div>
<div class="r" style="left:153.00px;top:517.20px;width:67.00px;height:4.20px;background:#54a095"></div>
<div class="r" style="left:152.60px;top:522.60px;width:0.45px;height:2.20px;background:#dfe3e3"></div>
<div class="r" style="left:163.55px;top:522.60px;width:0.45px;height:2.20px;background:#dfe3e3"></div>
<div class="r" style="left:174.50px;top:522.60px;width:0.45px;height:2.20px;background:#dfe3e3"></div>
<div class="r" style="left:185.45px;top:522.60px;width:0.45px;height:2.20px;background:#dfe3e3"></div>
<div class="r" style="left:196.40px;top:522.60px;width:0.45px;height:2.20px;background:#dfe3e3"></div>
<div class="r" style="left:207.35px;top:522.60px;width:0.45px;height:2.20px;background:#dfe3e3"></div>
<div class="r" style="left:218.30px;top:522.60px;width:0.45px;height:2.20px;background:#dfe3e3"></div>
<div class="r" style="left:229.30px;top:516.20px;width:0.45px;height:8.50px;background:#e9ebeb"></div>
<div class="t " style="left:237.00px;top:518.79px;font-size:4.558px;letter-spacing:0.010px;">1 ms</div>
<div class="t " style="left:261.00px;top:522.79px;font-size:4.558px;letter-spacing:0.085px;">0 ms</div>
<div class="t " style="left:299.40px;top:522.79px;font-size:4.558px;letter-spacing:0.085px;">0 ms</div>
<div class="t " style="left:337.70px;top:522.79px;font-size:4.558px;letter-spacing:0.085px;">0 ms</div>
<div class="t " style="left:376.30px;top:522.79px;font-size:4.558px;letter-spacing:0.056px;">Jan 17th, ...</div>
<div class="t " style="left:414.80px;top:522.79px;font-size:4.558px;letter-spacing:0.056px;">Jan 17th, ...</div>
<svg style="left:454.20px;top:521.80px" width="5" height="5"><path d="M0.4 3.3 V0.4 H3.2" fill="none" stroke="#545b64" stroke-width="0.75"/><rect x="1.5" y="1.5" width="3.1" height="3.2" rx="0.5" fill="none" stroke="#545b64" stroke-width="0.75"/></svg>
<div class="t " style="left:461.00px;top:522.79px;font-size:4.558px;letter-spacing:-0.175px;">SELEC...</div>
<div class="t " style="left:491.30px;top:522.79px;font-size:4.558px;letter-spacing:0.161px;">10759960...</div>
<div class="t " style="left:529.80px;top:522.79px;font-size:4.558px;letter-spacing:0.096px;">12329928</div>
</div></body></html>
